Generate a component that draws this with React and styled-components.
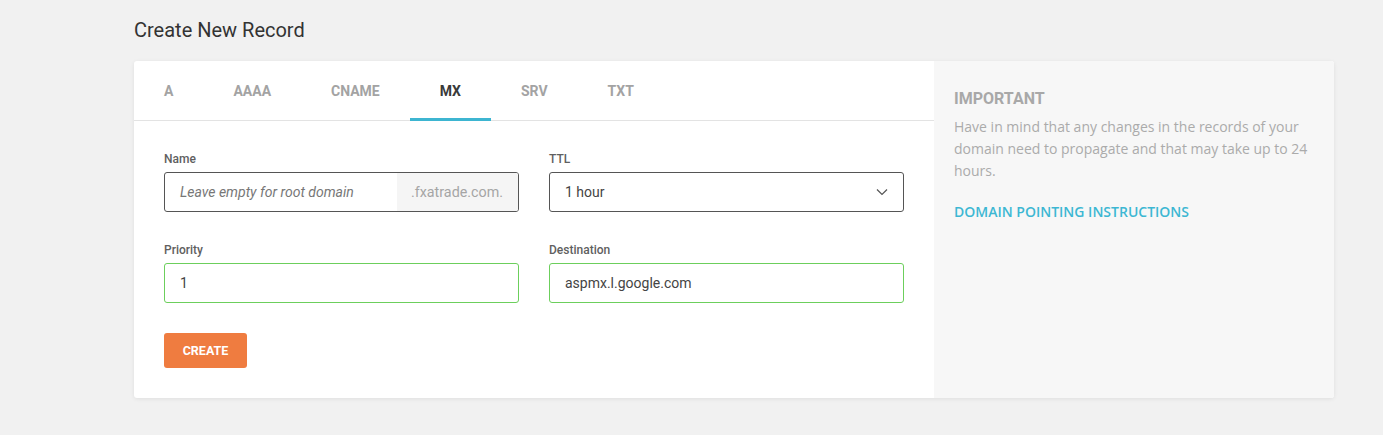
import React from 'react';
import styled, { createGlobalStyle } from 'styled-components';

const GlobalStyle = createGlobalStyle`
    body {
        margin: 0;
        background: #f1f1f1;
        font-family: Roboto, "Liberation Sans", sans-serif;
    }
`

//styling
const Page = styled.div`
    padding: 17px 49px 37px 134px;
`

const Title = styled.h2`
    margin: 0 0 18px;
    font-size: 20px;
    font-weight: 400;
    color: #333;
    line-height: 26px;
`

const Card = styled.div`
    display: flex;
    width: 1200px;
    background: #fff;
    border-radius: 3px;
    box-shadow: 0 1px 4px rgba(0, 0, 0, 0.08);
    overflow: hidden;
`

const Main = styled.div`
    width: 800px;
`

const Tabs = styled.div`
    display: flex;
    height: 59px;
    border-bottom: 1px solid #e3e3e3;
`

const Tab = styled.div`
    padding: 0 30px;
    display: flex;
    align-items: center;
    font-size: 14px;
    font-weight: 700;
    color: ${pr => pr.active ? '#3a3a3a' : '#a3a3a3'};
    border-bottom: 3px solid ${pr => pr.active ? '#3db5d1' : 'transparent'};
    margin-bottom: -1px;
    padding-top: 2px;
`

const Form = styled.div`
    padding: 31px 30px 30px;
`

const Grid = styled.div`
    display: grid;
    grid-template-columns: 1fr 1fr;
    column-gap: 30px;
    row-gap: 31px;
`

const Field = styled.div`
    display: flex;
    flex-direction: column;
`

const Label = styled.label`
    font-size: 12px;
    font-weight: 500;
    color: #606060;
    margin-bottom: 6px;
    line-height: 14px;
`

const Box = styled.div`
    display: flex;
    align-items: center;
    height: 38px;
    border: 1px solid ${pr => pr.valid ? '#6ccf5c' : '#555'};
    border-radius: 3px;
    overflow: hidden;
    font-size: 14px;
    color: #444;
`

const Value = styled.span`
    flex: 1;
    padding-left: 15px;
`

const Placeholder = styled.span`
    flex: 1;
    padding-left: 15px;
    font-style: italic;
    font-size: 14px;
    color: #777;
`

const Suffix = styled.span`
    display: flex;
    align-items: center;
    height: 100%;
    padding: 0 15px 0 14px;
    background: #f5f5f5;
    color: #a5a5a5;
    font-size: 14.3px;
`

const Chevron = styled.svg`
    margin-right: 15px;
`

const CreateButton = styled.button`
    margin-top: 30px;
    width: 83px;
    height: 35px;
    border: none;
    border-radius: 3px;
    background: #ef7c40;
    color: #fff;
    font-family: Roboto, "Liberation Sans", sans-serif;
    font-size: 12.5px;
    font-weight: 700;
`

const Aside = styled.div`
    flex: 1;
    background: #f7f7f7;
    padding: 28px 20px;
    font-family: "Open Sans", "Liberation Sans", sans-serif;
`

const AsideTitle = styled.div`
    font-family: Roboto, "Liberation Sans", sans-serif;
    font-size: 16px;
    font-weight: 700;
    color: #a8a8a8;
    line-height: 20px;
    margin-bottom: 7px;
`

const AsideText = styled.p`
    margin: 0 0 18px;
    font-size: 14px;
    line-height: 22px;
    color: #ababab;
`

const AsideLink = styled.a`
    font-size: 14px;
    font-weight: 600;
    color: #3db7d3;
    text-decoration: none;
`


//********************************************* */
const types = ['A', 'AAAA', 'CNAME', 'MX', 'SRV', 'TXT'];

function App() {
    return (
        <Page>
            <GlobalStyle />
            <Title>Create New Record</Title>
            <Card>
                <Main>
                    <Tabs>
                        {types.map(t => <Tab key={t} active={t === 'MX'}>{t}</Tab>)}
                    </Tabs>
                    <Form>
                        <Grid>
                            <Field>
                                <Label>Name</Label>
                                <Box>
                                    <Placeholder>Leave empty for root domain</Placeholder>
                                    <Suffix>.fxatrade.com.</Suffix>
                                </Box>
                            </Field>
                            <Field>
                                <Label>TTL</Label>
                                <Box>
                                    <Value>1 hour</Value>
                                    <Chevron width="12" height="8" viewBox="0 0 12 8">
                                        <path d="M1 1.5l5 5 5-5" fill="none" stroke="#555" strokeWidth="1.2" />
                                    </Chevron>
                                </Box>
                            </Field>
                            <Field>
                                <Label>Priority</Label>
                                <Box valid><Value>1</Value></Box>
                            </Field>
                            <Field>
                                <Label>Destination</Label>
                                <Box valid><Value>aspmx.l.google.com</Value></Box>
                            </Field>
                        </Grid>
                        <CreateButton>CREATE</CreateButton>
                    </Form>
                </Main>
                <Aside>
                    <AsideTitle>IMPORTANT</AsideTitle>
                    <AsideText>Have in mind that any changes in the records of your domain need to propagate and that may take up to 24 hours.</AsideText>
                    <AsideLink href="#">DOMAIN POINTING INSTRUCTIONS</AsideLink>
                </Aside>
            </Card>
        </Page>
    )
}


export default App;
